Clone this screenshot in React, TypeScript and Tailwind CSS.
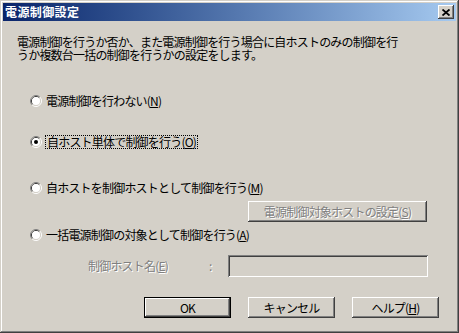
import React from "react";

const raised =
  "shadow-[inset_-1px_-1px_#404040,inset_1px_1px_#ffffff,inset_-2px_-2px_#808080,inset_2px_2px_#d4d0c8]";
const disabledText = "text-[#808080] [text-shadow:1px_1px_0_#ffffff]";

function Radio({ checked = false }: { checked?: boolean }) {
  return (
    <svg width="12" height="12" viewBox="0 0 12 12" className="shrink-0">
      <path d="M2.11,9.89 A5.5,5.5 0 0 1 9.89,2.11" fill="none" stroke="#808080" strokeWidth="1" />
      <path d="M9.89,2.11 A5.5,5.5 0 0 1 2.11,9.89" fill="none" stroke="#ffffff" strokeWidth="1" />
      <path d="M2.82,9.18 A4.5,4.5 0 0 1 9.18,2.82" fill="none" stroke="#404040" strokeWidth="1" />
      <path d="M9.18,2.82 A4.5,4.5 0 0 1 2.82,9.18" fill="none" stroke="#d4d0c8" strokeWidth="1" />
      <circle cx="6" cy="6" r="4" fill="#ffffff" />
      {checked && <circle cx="6" cy="6" r="2" fill="#000000" />}
    </svg>
  );
}

function U({ children }: { children: React.ReactNode }) {
  return <span className="underline underline-offset-[1px]">{children}</span>;
}

export default function App() {
  return (
    <div className="w-[459px] h-[333px] bg-[#d4d0c8] p-[3px] shadow-[inset_-1px_-1px_#404040,inset_1px_1px_#d4d0c8,inset_-2px_-2px_#808080,inset_2px_2px_#ffffff] font-['Noto_Sans_CJK_JP',sans-serif] text-[12px] tracking-[-0.8px] text-black overflow-hidden">
      {/* Title bar */}
      <div className="h-[18px] flex items-center justify-between bg-gradient-to-r from-[#0a246a] to-[#a6caf0] pl-[2px] pr-[2px]">
        <span className="text-white font-bold text-[12px] tracking-[0.4px] leading-[18px]">電源制御設定</span>
        <div className={`w-[16px] h-[14px] bg-[#d4d0c8] flex items-center justify-center ${raised}`}>
          <svg width="8" height="7" viewBox="0 0 8 7">
            <path d="M0.5,0.5 L7.5,6.5 M7.5,0.5 L0.5,6.5" stroke="#000" strokeWidth="1.8" />
          </svg>
        </div>
      </div>

      {/* Description */}
      <div className="ml-[14px] mt-[14px] whitespace-nowrap">
        <div className="h-[13px] leading-[13px]">電源制御を行うか否か、また電源制御を行う場合に自ホストのみの制御を行</div>
        <div className="h-[13px] leading-[13px]">うか複数台一括の制御を行うかの設定をします。</div>
      </div>

      {/* Radio 1 */}
      <div className="flex items-center h-[14px] ml-[27px] mt-[33px]">
        <Radio />
        <span className="ml-[4px] leading-[14px] whitespace-nowrap">
          電源制御を行わない(<U>N</U>)
        </span>
      </div>

      {/* Radio 2 */}
      <div className="flex items-center h-[14px] ml-[27px] mt-[27px]">
        <Radio checked />
        <span className="ml-[3px] border border-dotted border-black px-[1px] leading-[12px] whitespace-nowrap">
          自ホスト単体で制御を行う(<U>O</U>)
        </span>
      </div>

      {/* Radio 3 */}
      <div className="flex items-center h-[14px] ml-[27px] mt-[32px]">
        <Radio />
        <span className="ml-[4px] leading-[14px] whitespace-nowrap">
          自ホストを制御ホストとして制御を行う(<U>M</U>)
        </span>
      </div>

      {/* Settings button */}
      <div
        className={`ml-[245px] mt-[6px] w-[179px] h-[21px] flex items-center justify-center ${raised} ${disabledText} whitespace-nowrap`}
      >
        電源制御対象ホストの設定(<U>S</U>)
      </div>

      {/* Radio 4 */}
      <div className="flex items-center h-[14px] ml-[27px] mt-[6px]">
        <Radio />
        <span className="ml-[4px] leading-[14px] whitespace-nowrap">
          一括電源制御の対象として制御を行う(<U>A</U>)
        </span>
      </div>

      {/* Host name row */}
      <div className="flex items-center h-[22px] mt-[13px]">
        <span className={`ml-[85px] w-[121px] whitespace-nowrap ${disabledText}`}>
          制御ホスト名(<U>E</U>)
        </span>
        <span className={`w-[19px] ${disabledText}`}>:</span>
        <div className="w-[200px] h-[22px] bg-[#d4d0c8] shadow-[inset_1px_1px_#808080,inset_-1px_-1px_#ffffff,inset_2px_2px_#404040,inset_-2px_-2px_#d4d0c8]" />
      </div>

      {/* Buttons */}
      <div className="flex items-center mt-[20px] ml-[141px] gap-[17px]">
        <div className="w-[87px] h-[21px] border border-black">
          <div className="w-full h-full flex items-center justify-center bg-[#d4d0c8] shadow-[inset_-1px_-1px_#404040,inset_1px_1px_#ffffff,inset_-2px_-2px_#808080]">
            OK
          </div>
        </div>
        <div className={`w-[87px] h-[21px] flex items-center justify-center ${raised}`}>キャンセル</div>
        <div className={`w-[87px] h-[21px] flex items-center justify-center ${raised}`}>
          ヘルプ(<U>H</U>)
        </div>
      </div>
    </div>
  );
}
